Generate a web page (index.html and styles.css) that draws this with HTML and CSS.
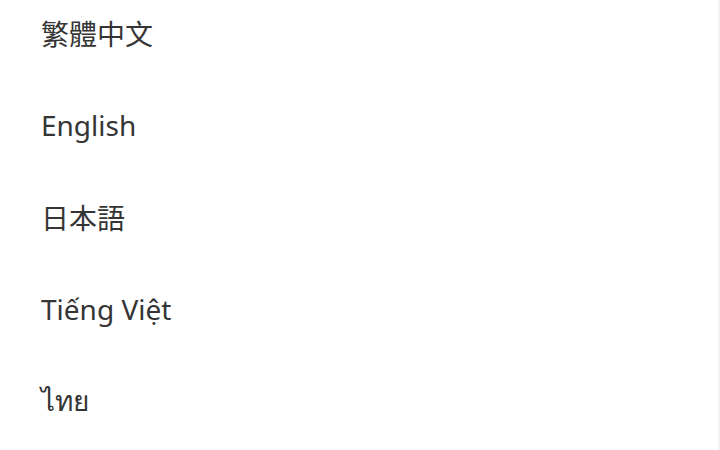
FILE: index.html
```html
<!DOCTYPE html>
<html lang="zh-Hant">
<head>
<meta charset="utf-8">
<title>Language</title>
<link rel="stylesheet" href="styles.css">
</head>
<body>
<div class="panel">
  <ul class="lang-list">
    <li class="lang-item" lang="zh-Hant">繁體中文</li>
    <li class="lang-item" lang="en">English</li>
    <li class="lang-item" lang="ja">日本語</li>
    <li class="lang-item" lang="vi">Tiếng Việt</li>
    <li class="lang-item" lang="th">ไทย</li>
  </ul>
</div>
</body>
</html>
```

FILE: styles.css
```css
html, body {
  margin: 0;
  padding: 0;
  height: 100%;
  background: #ffffff;
  overflow: hidden;
}

.panel {
  height: 450px;
  box-sizing: border-box;
  border-right: 2px solid #f3f3f3;
  background: #ffffff;
  overflow: hidden;
}

.lang-list {
  list-style: none;
  margin: -13px 0 0 0;
  padding: 0 0 0 41px;
}

.lang-item {
  height: 92px;
  display: flex;
  align-items: center;
  font-family: "Noto Sans", "Noto Sans CJK TC", sans-serif;
  font-size: 28px;
  color: #353535;
}

.lang-item:lang(ja) {
  font-family: "Noto Sans", "Noto Sans CJK JP", sans-serif;
}
```
